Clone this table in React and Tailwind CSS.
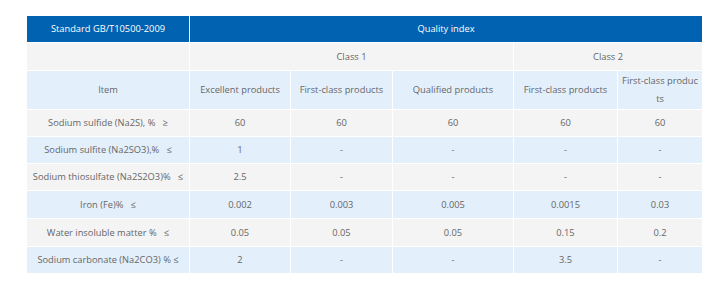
import React from "react";

const rows = [
  ["Sodium sulfide (Na2S), %\u00a0\u00a0 \u2265", "60", "60", "60", "60", "60"],
  ["Sodium sulfite (Na2SO3),%\u00a0\u00a0 \u2264", "1", "-", "-", "-", "-"],
  ["Sodium thiosulfate (Na2S2O3)%\u00a0\u00a0 \u2264", "2.5", "-", "-", "-", "-"],
  ["Iron (Fe)%\u00a0\u00a0 \u2264", "0.002", "0.003", "0.005", "0.0015", "0.03"],
  ["Water insoluble matter %\u00a0\u00a0 \u2264", "0.05", "0.05", "0.05", "0.15", "0.2"],
  ["Sodium carbonate (Na2CO3) % \u2264", "2", "-", "-", "3.5", "-"],
];

const heights = ["h-[27px]", "h-[27px]", "h-[27px]", "h-[28px]", "h-[28px]", "h-[27px]"];

export default function App() {
  return (
    <div className="w-[727px] h-[295px] bg-white pt-[15px] pl-[26px]" style={{ fontFamily: '"Open Sans", "Noto Sans", sans-serif' }}>
      <table className="table-fixed border-collapse w-[676px] text-[9.3px] leading-[18px] text-[#666] text-center">
        <colgroup>
          <col className="w-[163px]" />
          <col className="w-[101px]" />
          <col className="w-[102px]" />
          <col className="w-[121px]" />
          <col className="w-[104px]" />
          <col className="w-[85px]" />
        </colgroup>
        <tbody>
          <tr className="h-[27px] bg-[#0062b1] text-white">
            <td className="border border-white px-[5px]">Standard GB/T10500-2009</td>
            <td colSpan={5} className="border border-white px-[5px]">Quality index</td>
          </tr>
          <tr className="h-[28px] bg-[#f4f4f4]">
            <td className="border border-white px-[5px]"></td>
            <td colSpan={3} className="border border-white px-[5px]">Class 1</td>
            <td colSpan={2} className="border border-white px-[5px]">Class 2</td>
          </tr>
          <tr className="h-[39px] bg-[#e3f0fc]">
            <td className="border border-white px-[5px]">Item</td>
            <td className="border border-white px-[5px]">Excellent products</td>
            <td className="border border-white px-[5px]">First-class products</td>
            <td className="border border-white px-[5px]">Qualified products</td>
            <td className="border border-white px-[5px]">First-class products</td>
            <td className="border border-white px-[2px] whitespace-nowrap">First-class produc<br />ts</td>
          </tr>
          {rows.map((r, i) => (
            <tr key={i} className={`${heights[i]} ${i % 2 === 0 ? "bg-[#f4f4f4]" : "bg-[#e3f0fc]"}`}>
              {r.map((c, j) => (
                <td key={j} className="border border-white px-[5px] whitespace-pre">{c}</td>
              ))}
            </tr>
          ))}
        </tbody>
      </table>
    </div>
  );
}
